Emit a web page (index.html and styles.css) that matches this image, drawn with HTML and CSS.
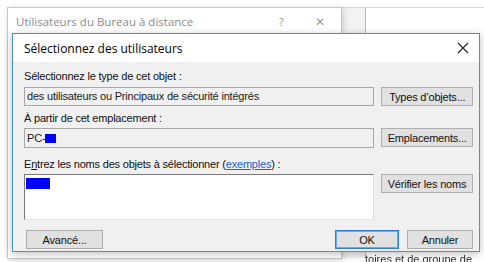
FILE: index.html
```html
<!DOCTYPE html>
<html lang="fr">
<head>
    <meta charset="UTF-8">
    <title>Sélectionnez des utilisateurs</title>
    <link rel="stylesheet" href="styles.css">
</head>
<body>

<div class="desk">

    <!-- Fenêtre derrière -->
    <div class="win-side"></div>
    <div class="win-back">
        <div class="back-title">
            <span class="back-name">Utilisateurs du Bureau à distance</span>
            <span class="back-help">?</span>
            <span class="back-close">&#x2715;</span>
        </div>
    </div>

    <div class="below">toires et de groupe de tra</div>

    <!-- Dialogue -->
    <div class="dialog">
        <div class="titlebar">
            <span class="title">Sélectionnez des utilisateurs</span>
            <svg class="close" width="12" height="12" viewBox="0 0 12 12">
                <path d="M1 1 L11 11 M11 1 L1 11" stroke="#222" stroke-width="1.1" fill="none"/>
            </svg>
        </div>

        <div class="body">
            <div class="label">Sélectionnez le type de cet objet :</div>
            <div class="row">
                <div class="field">des utilisateurs ou Principaux de sécurité intégrés</div>
                <button class="btn">Types d’objets...</button>
            </div>

            <div class="label label-loc">À partir de cet emplacement :</div>
            <div class="row">
                <div class="field field-loc">PC-<span class="mask mask-pc"></span></div>
                <button class="btn">Emplacements...</button>
            </div>

            <div class="label label-names">E<u>n</u>trez les noms des objets à sélectionner (<a href="#">exemples</a>) :</div>
            <div class="row">
                <div class="names"><span class="mask mask-name"></span></div>
                <button class="btn">Vérifier les noms</button>
            </div>

            <div class="footer">
                <button class="btn btn-adv">Avancé...</button>
                <div class="actions">
                    <button class="btn btn-ok">OK</button>
                    <button class="btn btn-cancel">Annuler</button>
                </div>
            </div>
        </div>
    </div>
</div>

</body>
</html>
```

FILE: styles.css
```css
/* Général */
body {
    margin: 0;
    background: #ffffff;
    font-family: 'Liberation Sans', Arial, sans-serif;
    font-size: 11px;
    color: #1a1a1a;
}

.desk {
    position: relative;
    width: 484px;
    height: 262px;
    overflow: hidden;
    background: #ffffff;
}

/* Fenêtre derrière */
.win-back {
    position: absolute;
    left: 7px;
    top: 7px;
    width: 333px;
    height: 250px;
    background: #ffffff;
    border: 1px solid #c8c8c8;
    box-shadow: 1px 1px 6px rgba(0, 0, 0, 0.18);
}

.back-title {
    display: flex;
    align-items: center;
    height: 26px;
    padding-left: 8px;
    font-family: 'Open Sans', sans-serif;
    font-size: 11.5px;
    color: #8a8a8a;
}

.back-name {
    flex: 1;
}

.back-help {
    width: 36px;
    font-size: 11px;
    color: #9a9a9a;
}

.back-close {
    width: 26px;
    font-size: 12px;
    color: #9a9a9a;
}

.win-side {
    position: absolute;
    left: 336px;
    top: 7px;
    width: 29px;
    height: 250px;
    background: #f2f2f2;
    border-top: 1px solid #d6d6d6;
    border-right: 1px solid #b8b8b8;
}

.win-side::after {
    content: '';
    position: absolute;
    left: 30px;
    top: -1px;
    width: 200px;
    border-top: 1px solid #d6d6d6;
}

/* Dialogue */
.dialog {
    position: absolute;
    left: 12px;
    top: 33px;
    width: 466px;
    height: 217px;
    background: #f0f0f0;
    border: 1px solid #4a90cc;
    box-shadow: 0 2px 8px rgba(0, 0, 0, 0.25);
    display: flex;
    flex-direction: column;
}

.titlebar {
    display: flex;
    align-items: center;
    height: 28px;
    padding: 0 10px 0 11px;
    background: #ffffff;
    font-family: 'Open Sans', sans-serif;
    font-size: 12px;
    color: #000000;
}

.title {
    flex: 1;
}

.body {
    display: flex;
    flex-direction: column;
    padding: 0 6px 0 11px;
}

.label {
    height: 14px;
    line-height: 14px;
    margin-top: 7px;
    margin-bottom: 4px;
    color: #111111;
    letter-spacing: -0.2px;
}

.label-loc {
    margin-top: 5px;
    margin-bottom: 3px;
}

.label-names {
    margin-top: 9px;
    margin-bottom: 3px;
}

.label a {
    color: #1a66c8;
}

.row {
    display: flex;
    align-items: flex-start;
    gap: 6px;
}

.field {
    width: 348px;
    height: 17px;
    line-height: 17px;
    padding-left: 2px;
    border: 1px solid #a8a8a8;
    background: #f0f0f0;
    letter-spacing: -0.2px;
    white-space: nowrap;
}

.field-loc {
    height: 18px;
    display: flex;
    align-items: center;
}

.names {
    width: 350px;
    height: 46px;
    padding: 3px 0 0 1px;
    border: 1px solid #7a7a7a;
    border-right-color: #dcdcdc;
    border-bottom-color: #e4e4e4;
    background: #ffffff;
    box-sizing: border-box;
}

.mask {
    display: inline-block;
    background: #0000ff;
}

.mask-pc {
    width: 11px;
    height: 9px;
}

.mask-name {
    width: 24px;
    height: 11px;
}

/* Boutons */
.btn {
    width: 92px;
    height: 19px;
    margin-left: 1px;
    padding: 0;
    border: 1px solid #adadad;
    background: #e1e1e1;
    font-family: 'Liberation Sans', Arial, sans-serif;
    font-size: 11px;
    color: #111111;
    letter-spacing: -0.2px;
}

.footer {
    display: flex;
    justify-content: space-between;
    margin-top: 10px;
}

.btn-adv {
    width: 77px;
    margin-left: 2px;
}

.actions {
    display: flex;
    gap: 8px;
}

.btn-ok {
    width: 64px;
    border: 1px solid #2f7ed8;
    box-shadow: inset 0 0 0 1px #6aaae8;
}

.btn-cancel {
    width: 66px;
    margin-left: 0;
}

/* Texte en dessous (coupé par le bord) */
.below {
    position: absolute;
    left: 365px;
    top: 253px;
    font-size: 11px;
    color: #333333;
    filter: blur(0.6px);
}
```
